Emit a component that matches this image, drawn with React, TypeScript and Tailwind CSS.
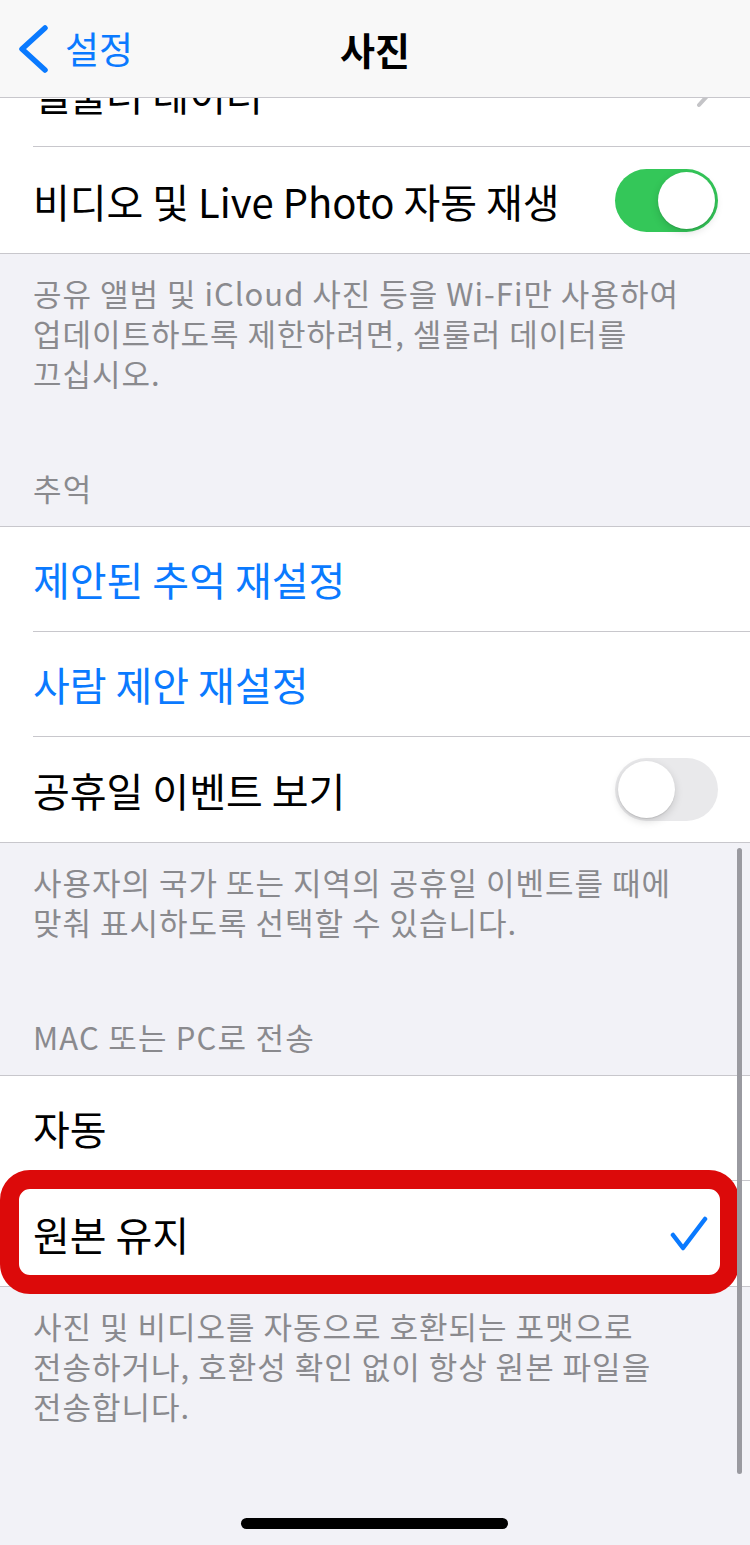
import React from "react";

const font = {
  fontFamily: '"Noto Sans CJK KR", "Noto Sans", sans-serif',
};

function Toggle({ on }: { on: boolean }) {
  return (
    <div
      className={
        "flex h-[63px] w-[103px] shrink-0 items-center rounded-full px-[3px] " +
        (on ? "justify-end bg-[#34c759]" : "justify-start bg-[#e9e9eb]")
      }
    >
      <div className="h-[57px] w-[57px] rounded-full bg-white shadow-[0_3px_8px_rgba(0,0,0,0.15),0_1px_1px_rgba(0,0,0,0.1)]" />
    </div>
  );
}

function Row({
  label,
  blue,
  last,
  right,
}: {
  label: string;
  blue?: boolean;
  last?: boolean;
  right?: React.ReactNode;
}) {
  return (
    <div className="pl-[33px]">
      <div
        className={
          "flex h-[105px] items-center justify-between pr-[32px] " +
          (last ? "" : "border-b border-[#c8c7cc]")
        }
      >
        <span
          className={
            "text-[40px] leading-none " + (blue ? "text-[#0a7aff]" : "text-black")
          }
        >
          {label}
        </span>
        {right}
      </div>
    </div>
  );
}

function Footer({ lines }: { lines: string[] }) {
  return (
    <div className="px-[33px] pt-[19px] text-[31px] leading-[40px] tracking-[1px] text-[#8a8a8e]">
      {lines.map((l) => (
        <div key={l}>{l}</div>
      ))}
    </div>
  );
}

function Header({ text }: { text: string }) {
  return (
    <div className="px-[33px] pb-[18px] pt-[75px] text-[31px] leading-[40px] tracking-[1.2px] text-[#8a8a8e]">
      {text}
    </div>
  );
}

function Check() {
  return (
    <svg width="38" height="36" viewBox="0 0 38 36" className="mr-[10px]">
      <path
        d="M3 19 L13 32 L35 3"
        fill="none"
        stroke="#0a7aff"
        strokeWidth="4.5"
        strokeLinecap="round"
        strokeLinejoin="round"
      />
    </svg>
  );
}

export default function App() {
  return (
    <div className="relative h-[1545px] overflow-hidden bg-[#f2f2f7]" style={font}>
      {/* 내비게이션 바 */}
      <div className="relative flex h-[98px] items-center border-b border-[#c8c7cc] bg-[#f8f8f8]">
        <div className="flex items-center pl-[17px]">
          <svg width="32" height="48" viewBox="0 0 32 48">
            <path
              d="M28 3 L5 24 L28 45"
              fill="none"
              stroke="#0a7aff"
              strokeWidth="5.5"
              strokeLinecap="round"
              strokeLinejoin="round"
            />
          </svg>
          <span className="ml-[16px] text-[37px] leading-none text-[#0a7aff]">설정</span>
        </div>
        <span className="absolute left-1/2 -translate-x-1/2 text-[38px] font-bold leading-none text-black">
          사진
        </span>
      </div>

      {/* 스크롤되어 가려진 행 */}
      <div className="h-[50px] overflow-hidden bg-white">
        <div className="-mt-[56px]">
          <Row
            label="셀룰러 데이터"
            right={
              <svg width="16" height="28" viewBox="0 0 16 28" className="mr-[6px]">
                <path
                  d="M3 3 L13 14 L3 25"
                  fill="none"
                  stroke="#c4c4c7"
                  strokeWidth="4"
                  strokeLinecap="round"
                  strokeLinejoin="round"
                />
              </svg>
            }
          />
        </div>
      </div>
      <div className="border-b border-[#c8c7cc] bg-white">
        <Row label="비디오 및 Live Photo 자동 재생" last right={<Toggle on />} />
      </div>
      <Footer
        lines={[
          "공유 앨범 및 iCloud 사진 등을 Wi-Fi만 사용하여",
          "업데이트하도록 제한하려면, 셀룰러 데이터를",
          "끄십시오.",
        ]}
      />

      <Header text="추억" />
      <div className="border-y border-[#c8c7cc] bg-white">
        <Row label="제안된 추억 재설정" blue />
        <Row label="사람 제안 재설정" blue />
        <Row label="공휴일 이벤트 보기" last right={<Toggle on={false} />} />
      </div>
      <Footer
        lines={[
          "사용자의 국가 또는 지역의 공휴일 이벤트를 때에",
          "맞춰 표시하도록 선택할 수 있습니다.",
        ]}
      />

      <Header text="MAC 또는 PC로 전송" />
      <div className="border-y border-[#c8c7cc] bg-white">
        <Row label="자동" />
        <div className="relative">
          <Row label="원본 유지" last right={<Check />} />
          {/* 강조 표시 */}
          <div className="pointer-events-none absolute -bottom-[8px] -top-[11px] left-0 right-[11px] rounded-[30px] border-[19px] border-[#dc0a0a]" />
        </div>
      </div>
      <Footer
        lines={[
          "사진 및 비디오를 자동으로 호환되는 포맷으로",
          "전송하거나, 호환성 확인 없이 항상 원본 파일을",
          "전송합니다.",
        ]}
      />

      {/* 스크롤 막대 */}
      <div className="absolute right-[8px] top-[848px] h-[626px] w-[5px] rounded-full bg-[#9a9aa0]" />
      {/* 홈 인디케이터 */}
      <div className="absolute bottom-[16px] left-[241px] h-[11px] w-[267px] rounded-full bg-black" />
    </div>
  );
}
